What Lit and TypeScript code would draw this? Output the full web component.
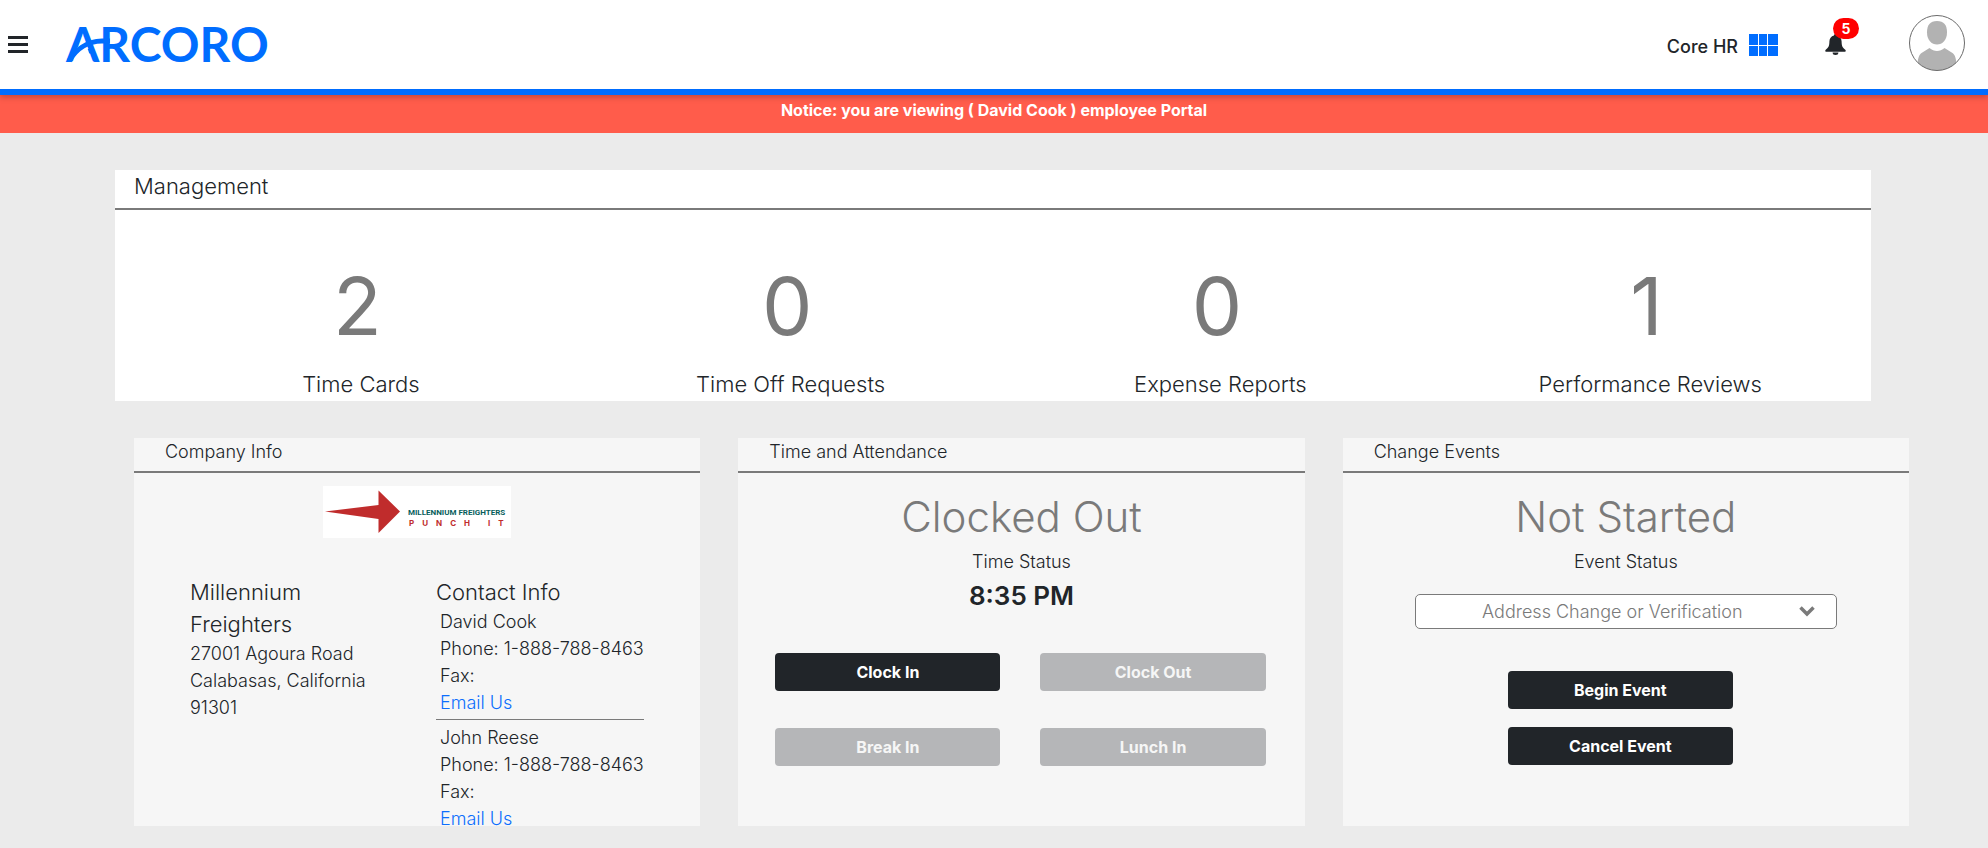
import { LitElement, html, css } from "lit";
import { customElement, property, state } from "lit/decorators.js";

const BLUE = "#006dff";

@customElement("portal-header")
class PortalHeader extends LitElement {
  @property({ type: Number }) notifications = 0;

  static styles = css`
    :host { display: block; }
    header {
      position: relative;
      z-index: 1;
      display: flex;
      align-items: center;
      height: 89px;
      padding: 0 23px 0 8px;
      background: #fff;
      border-bottom: 6px solid #006dff;
      box-shadow: 0 2px 6px rgba(0, 0, 0, 0.25);
    }
    button { padding: 0; border: 0; background: none; color: inherit; cursor: pointer; font: inherit; }
    svg { display: block; overflow: visible; }
    .brand { margin-left: 38px; margin-right: auto; }
    .wordmark { font-family: Lato, sans-serif; font-size: 48px; font-weight: 700; }
    .product { display: flex; align-items: center; gap: 11px; font-size: 18px; font-weight: 500; line-height: 24px; }
    .product span { padding-top: 4px; }
    .bell { position: relative; margin-left: 47px; }
    .badge {
      position: absolute;
      left: 8px;
      top: -16px;
      width: 26px;
      border-radius: 11px;
      background: #f00;
      color: #fff;
      font-size: 14px;
      font-weight: 700;
      line-height: 21px;
      text-align: center;
    }
    .account { margin-left: 63px; padding-bottom: 3px; }
  `;

  render() {
    return html`
      <header>
        <button aria-label="Menu">
          <svg width="20" height="18" viewBox="0 0 20 18" fill="#212529">
            <rect width="20" height="3" /><rect y="7" width="20" height="3" /><rect y="14" width="20" height="3" />
          </svg>
        </button>
        <a class="brand" href="#" aria-label="Arcoro home">
          <svg width="202" height="36" viewBox="0 0 202 36" fill=${BLUE}>
            <text class="wordmark" x="0" y="35">ARCORO</text>
            <path d="M12 20h9l3 8.500H9z" fill="#fff" />
            <path d="M3 34C9 24 20 14 36 14H44" fill="none" stroke=${BLUE} stroke-width="5" />
          </svg>
        </a>
        <button class="product">
          <span>Core HR</span>
          <svg width="29" height="22" viewBox="0 0 29 22" fill=${BLUE}>
            <path d="M0 0h9v11H0zM10 0h8v11h-8zM19 0h10v11H19zM0 12h9v10H0zM10 12h8v10h-8zM19 12h10v10H19z" />
          </svg>
        </button>
        <button class="bell" aria-label="Notifications">
          <svg width="21" height="21" viewBox="0 0 21 21" fill="#212529">
            <path d="M10.500 0c.9 0 1.500.6 1.500 1.400 2.900.7 4.600 3 4.600 6 0 4.600 1.200 6.400 3.700 8.300.9.800.4 2.100-.7 2.100H1.400c-1.100 0-1.600-1.300-.7-2.100 2.500-1.900 3.700-3.700 3.700-8.300 0-3 1.700-5.300 4.600-6C9 .6 9.600 0 10.500 0zM7.600 18.500h5.800a2.900 2.500 0 0 1-5.800 0z" />
          </svg>
          <span class="badge">${this.notifications}</span>
        </button>
        <button class="account" aria-label="Account">
          <svg width="56" height="56" viewBox="0 0 56 56">
            <clipPath id="round"><circle cx="28" cy="28" r="27.500" /></clipPath>
            <g clip-path="url(#round)" fill="#b2b2b2">
              <path d="M28 6c7 0 10 4 10 11.500C38 25 33.500 29.500 28 29.500S18 25 18 17.500C18 10 21 6 28 6z" />
              <path d="M8.500 50c.3-7 1.500-10 4-12l8-5c4.500 4 10.500 4 15 0l8 5c2.500 2 3.700 5 4 12v8h-39z" />
            </g>
            <circle cx="28" cy="28" r="27.500" fill="none" stroke="#6b6b6b" />
          </svg>
        </button>
      </header>
    `;
  }
}

@customElement("info-card")
class InfoCard extends LitElement {
  @property() heading = "";

  static styles = css`
    :host { display: block; height: 388px; overflow: hidden; background: #f6f6f6; }
    h2 {
      margin: 0;
      padding: 0 31px 6px;
      border-bottom: 2px solid #7a7a7a;
      font-size: 18px;
      font-weight: 300;
      line-height: 27px;
    }
  `;

  render() {
    return html`<h2>${this.heading}</h2><slot></slot>`;
  }
}

@customElement("app-root")
class AppRoot extends LitElement {
  @state() private stats = [
    { count: 2, label: "Time Cards" },
    { count: 0, label: "Time Off Requests" },
    { count: 0, label: "Expense Reports" },
    { count: 1, label: "Performance Reviews" },
  ];
  @state() private contacts = [
    { name: "David Cook", phone: "1-888-788-8463" },
    { name: "John Reese", phone: "1-888-788-8463" },
  ];
  @state() private punches = [
    { label: "Clock In", enabled: true },
    { label: "Clock Out", enabled: false },
    { label: "Break In", enabled: false },
    { label: "Lunch In", enabled: false },
  ];

  static styles = css`
    :host {
      display: block;
      min-height: 100vh;
      background: #ebebeb;
      color: #212529;
      font-family: Inter, "Liberation Sans", sans-serif;
      font-size: 18px;
      font-weight: 300;
      line-height: 27px;
    }
    h2, h3, p { margin: 0; font-weight: 300; }
    a { color: #0d6efd; text-decoration: none; }
    .notice {
      padding: 3px 0 11px;
      background: #ff5c4b;
      color: #fff;
      font-size: 16px;
      font-weight: 700;
      line-height: 24px;
      text-align: center;
    }
    .management { margin: 37px 117px 37px 115px; background: #fff; }
    .management h2 {
      padding: 0 19px 6px;
      border-bottom: 2px solid #7a7a7a;
      font-size: 22px;
      line-height: 32px;
    }
    .stats { display: grid; grid-template-columns: repeat(4, 1fr); padding: 48px 6px 0 31px; text-align: center; }
    .count { padding-right: 7px; color: #7a7a7a; font-size: 80px; font-weight: 400; line-height: 96px; }
    .label { padding: 14px 0 1px; font-size: 22px; line-height: 32px; }
    .cards { display: grid; grid-template-columns: repeat(3, 1fr); gap: 38px; padding: 0 79px 22px 134px; }
    .logo { display: block; margin: 13px auto 38px; background: #fff; }
    .logo-name { font: 700 8px Roboto, sans-serif; }
    .logo-tag { font: 700 8px Inter, sans-serif; letter-spacing: 8px; }
    .company { display: grid; grid-template-columns: 246px 208px; padding-left: 56px; }
    .company h3 { font-size: 22px; line-height: 32px; }
    .person { padding-left: 4px; }
    .rule { height: 1px; margin: 3px 0 4px; border: 0; background: #7a7a7a; }
    .status { text-align: center; }
    .big { padding-top: 20px; color: #7a7a7a; font-size: 42px; line-height: 48px; }
    .sub { padding-top: 7px; }
    .time { padding-top: 5px; font-size: 26px; font-weight: 600; line-height: 32px; }
    .btn {
      height: 38px;
      padding: 0;
      border: 0;
      border-radius: 4px;
      background: #212529;
      color: #fff;
      font: inherit;
      font-size: 16px;
      font-weight: 700;
    }
    .btn:disabled { background: #b5b6b8; color: #f6f6f6; }
    .punches { display: grid; grid-template-columns: 1fr 1fr; gap: 37px 40px; padding: 41px 39px 0 37px; }
    .picker { position: relative; margin: 19px 72px 42px; }
    .picker select {
      appearance: none;
      display: block;
      width: 100%;
      height: 35px;
      padding: 0 27px 0 0;
      border: 1px solid #7a7a7a;
      border-radius: 5px;
      background: #fff;
      color: #7a7a7a;
      font: inherit;
      text-align: center;
      text-align-last: center;
    }
    .picker svg { position: absolute; right: 22px; top: 12px; pointer-events: none; }
    .events { display: grid; justify-content: center; grid-template-columns: 225px; gap: 18px; padding-right: 11px; }
  `;

  render() {
    return html`
      <portal-header .notifications=${5}></portal-header>
      <div class="notice">Notice: you are viewing ( David Cook ) employee Portal</div>
      <section class="management">
        <h2>Management</h2>
        <div class="stats">
          ${this.stats.map((s) => html`<div><div class="count">${s.count}</div><div class="label">${s.label}</div></div>`)}
        </div>
      </section>
      <main class="cards">
        <info-card heading="Company Info">${this.company()}</info-card>
        <info-card heading="Time and Attendance">
          <div class="status">
            <p class="big">Clocked Out</p>
            <p class="sub">Time Status</p>
            <p class="time">8:35 PM</p>
          </div>
          <div class="punches">
            ${this.punches.map((p) => html`<button class="btn" ?disabled=${!p.enabled}>${p.label}</button>`)}
          </div>
        </info-card>
        <info-card heading="Change Events">
          <div class="status">
            <p class="big">Not Started</p>
            <p class="sub">Event Status</p>
          </div>
          <div class="picker">
            <select aria-label="Event type"><option>Address Change or Verification</option></select>
            <svg width="16" height="11" viewBox="0 0 16 11"><path d="M1.500 1.500L8 8l6.500-6.500" fill="none" stroke="#7a7a7a" stroke-width="3.500" /></svg>
          </div>
          <div class="events">
            <button class="btn">Begin Event</button>
            <button class="btn">Cancel Event</button>
          </div>
        </info-card>
      </main>
    `;
  }

  private company() {
    return html`
      <svg class="logo" width="188" height="52" viewBox="0 0 188 52" role="img" aria-label="Millennium Freighters">
        <path d="M2 25.500L55.500 19V4.500L77 25.500 55.500 47V33z" fill="#c02c2c" />
        <text class="logo-name" x="85" y="29" fill="#075e5c">MILLENNIUM FREIGHTERS</text>
        <text class="logo-tag" x="86" y="40" fill="#c02c2c">PUNCH IT</text>
      </svg>
      <div class="company">
        <div>
          <h3>Millennium<br />Freighters</h3>
          <p>27001 Agoura Road<br />Calabasas, California<br />91301</p>
        </div>
        <div>
          <h3>Contact Info</h3>
          ${this.contacts.map((c, i) => html`
            ${i ? html`<hr class="rule" />` : ""}
            <div class="person">${c.name}<br />Phone: ${c.phone}<br />Fax:<br /><a href="#">Email Us</a></div>
          `)}
        </div>
      </div>
    `;
  }
}
